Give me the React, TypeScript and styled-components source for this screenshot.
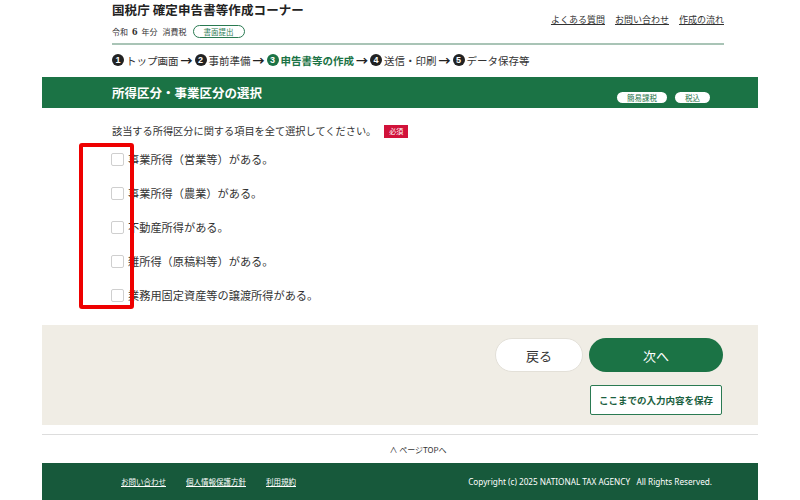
import React from "react";
import styled, { createGlobalStyle } from "styled-components";

const GlobalStyle = createGlobalStyle`
  html, body {
    margin: 0;
    padding: 0;
    background: #ffffff;
  }
  body {
    font-family: "Noto Sans CJK JP", "Noto Sans", sans-serif;
    color: #333333;
  }
`;

const Page = styled.div`
  width: 800px;
  height: 500px;
  overflow: hidden;
  position: relative;
`;

const Frame = styled.div`
  margin: 0 42px;
`;

const Inner = styled.div`
  padding: 0 34px 0 70px;
`;

const Header = styled(Inner)`
  padding-top: 1px;
`;

const HeaderTop = styled.div`
  display: flex;
  justify-content: space-between;
  align-items: flex-start;
`;

const Brand = styled.div`
  display: flex;
  flex-direction: column;
`;

const SiteTitle = styled.h1`
  margin: 0;
  font-size: 12.5px;
  font-weight: 700;
  line-height: 18px;
  color: #222;
  letter-spacing: 0.1px;
`;

const HeadLinks = styled.nav`
  display: flex;
  gap: 10px;
  margin-top: 12px;
`;

const HeadLink = styled.a`
  font-size: 9px;
  color: #333;
  text-decoration: underline;
  line-height: 14px;
`;

const MetaRow = styled.div`
  display: flex;
  align-items: center;
  gap: 5px;
  margin-top: 5px;
  font-size: 8px;
  color: #333;
  height: 14px;
`;

const Year = styled.span`
  font-size: 8px;
  b {
    font-size: 11px;
    font-weight: 700;
    margin: 0 4px;
    font-family: "Liberation Serif", serif;
  }
`;

const OutlinePill = styled.span`
  display: inline-flex;
  align-items: center;
  justify-content: center;
  width: 50px;
  height: 11px;
  border: 1px solid #2a7a52;
  border-radius: 7px;
  font-size: 7.5px;
  color: #2a7a52;
  margin-left: 1px;
`;

const Rule = styled.hr`
  margin: 5px 0 0;
  border: 0;
  border-top: 2px solid #a9c4b6;
`;

const Steps = styled.ol`
  list-style: none;
  margin: 0;
  padding: 0;
  display: flex;
  align-items: center;
  height: 30px;
  font-size: 10.5px;
  color: #333;
`;

const Step = styled.li<{ $current?: boolean }>`
  display: flex;
  align-items: center;
  gap: 2px;
  font-weight: ${(p) => (p.$current ? 700 : 400)};
  color: ${(p) => (p.$current ? "#1b7345" : "#333")};
  white-space: nowrap;
`;

const StepNum = styled.span<{ $current?: boolean }>`
  display: inline-flex;
  align-items: center;
  justify-content: center;
  width: 12px;
  height: 12px;
  border-radius: 50%;
  background: ${(p) => (p.$current ? "#1b7345" : "#222")};
  color: #fff;
  font-size: 9px;
  font-weight: 700;
  font-family: "Liberation Sans", sans-serif;
`;

const Arrow = styled.span`
  font-weight: 700;
  margin: 0 2px;
  font-size: 12px;
  color: #222;
`;

const SectionBar = styled.div`
  background: #1b7345;
  height: 31px;
  display: flex;
  align-items: center;
  justify-content: space-between;
  padding: 0 48px 0 70px;
  margin-top: 2px;
`;

const SectionTitle = styled.h2`
  margin: 0;
  font-size: 12.5px;
  font-weight: 700;
  color: #ffffff;
`;

const Tags = styled.div`
  display: flex;
  gap: 8px;
  margin-top: 10px;
`;

const Tag = styled.span<{ $w: number }>`
  display: inline-flex;
  align-items: center;
  justify-content: center;
  width: ${(p) => p.$w}px;
  height: 11px;
  border-radius: 6px;
  background: #ffffff;
  color: #1b7345;
  font-size: 7.5px;
`;

const Body = styled(Inner)`
  position: relative;
  padding-top: 16px;
  padding-bottom: 23px;
`;

const Prompt = styled.p`
  margin: 0;
  display: flex;
  align-items: center;
  gap: 8px;
  font-size: 10.2px;
  line-height: 14px;
  color: #333;
`;

const Required = styled.span`
  display: inline-flex;
  align-items: center;
  justify-content: center;
  background: #d1123a;
  color: #fff;
  font-size: 7px;
  width: 24px;
  height: 13px;
`;

const Options = styled.div`
  display: flex;
  flex-direction: column;
  gap: 21px;
  margin-top: 15px;
`;

const Option = styled.label`
  display: flex;
  align-items: center;
  gap: 4px;
  font-size: 11.2px;
  line-height: 13px;
  color: #333;
  margin-left: -1px;
`;

const Box = styled.span`
  width: 11px;
  height: 11px;
  border: 1px solid #cfcfcf;
  border-radius: 2px;
  background: #fff;
  flex: none;
`;

const Highlight = styled.div`
  position: absolute;
  left: 37px;
  top: 35px;
  width: 47px;
  height: 158px;
  border: 4px solid #ee0000;
  border-radius: 3px;
`;

const ActionArea = styled.div`
  background: #f0ede5;
  height: 100px;
  padding: 13px 35px 0 0;
  box-sizing: border-box;
  display: flex;
  flex-direction: column;
  align-items: flex-end;
  gap: 13px;
`;

const ButtonRow = styled.div`
  display: flex;
  gap: 6px;
`;

const BackButton = styled.button`
  width: 88px;
  height: 34px;
  border-radius: 17px;
  border: 1px solid #e3e0d8;
  background: #ffffff;
  font-family: inherit;
  font-size: 13px;
  color: #333;
`;

const NextButton = styled.button`
  width: 134px;
  height: 34px;
  border-radius: 17px;
  border: 0;
  background: #1b7345;
  font-family: inherit;
  font-size: 13px;
  color: #ffffff;
`;

const SaveButton = styled.button`
  width: 132px;
  height: 30px;
  border: 1px solid #2a7a52;
  border-radius: 2px;
  background: #ffffff;
  font-family: inherit;
  font-size: 9.5px;
  font-weight: 700;
  color: #1b6040;
  margin-right: 1px;
`;

const PageTop = styled(Inner)`
  margin-top: 9px;
  border-top: 1px solid #dddddd;
  height: 28px;
  display: flex;
  align-items: center;
  justify-content: center;
  font-size: 8px;
  color: #333;
`;

const Footer = styled.footer`
  background: #17593b;
  height: 40px;
  display: flex;
  align-items: center;
  justify-content: space-between;
  padding: 0 46px 4px 79px;
  box-sizing: border-box;
`;

const FootLinks = styled.div`
  display: flex;
  gap: 20px;
`;

const FootLink = styled.a`
  color: #fff;
  font-size: 7.5px;
  text-decoration: underline;
`;

const Copy = styled.span`
  color: #fff;
  font-size: 8.2px;
  font-family: "Noto Sans", sans-serif;
`;

const steps = [
  { n: 1, label: "トップ画面" },
  { n: 2, label: "事前準備" },
  { n: 3, label: "申告書等の作成", current: true },
  { n: 4, label: "送信・印刷" },
  { n: 5, label: "データ保存等" },
];

const options = [
  "事業所得（営業等）がある。",
  "事業所得（農業）がある。",
  "不動産所得がある。",
  "雑所得（原稿料等）がある。",
  "業務用固定資産等の譲渡所得がある。",
];

export default function App() {
  return (
    <Page>
      <GlobalStyle />
      <Frame>
        <Header>
          <HeaderTop>
            <Brand>
              <SiteTitle>国税庁 確定申告書等作成コーナー</SiteTitle>
              <MetaRow>
                <Year>
                  令和<b>6</b>年分
                </Year>
                <span>消費税</span>
                <OutlinePill>書面提出</OutlinePill>
              </MetaRow>
            </Brand>
            <HeadLinks>
              <HeadLink>よくある質問</HeadLink>
              <HeadLink>お問い合わせ</HeadLink>
              <HeadLink>作成の流れ</HeadLink>
            </HeadLinks>
          </HeaderTop>
          <Rule />
          <Steps>
            {steps.map((s, i) => (
              <React.Fragment key={s.n}>
                {i > 0 && <Arrow>→</Arrow>}
                <Step $current={s.current}>
                  <StepNum $current={s.current}>{s.n}</StepNum>
                  {s.label}
                </Step>
              </React.Fragment>
            ))}
          </Steps>
        </Header>

        <SectionBar>
          <SectionTitle>所得区分・事業区分の選択</SectionTitle>
          <Tags>
            <Tag $w={50}>簡易課税</Tag>
            <Tag $w={35}>税込</Tag>
          </Tags>
        </SectionBar>

        <Body>
          <Prompt>
            該当する所得区分に関する項目を全て選択してください。
            <Required>必須</Required>
          </Prompt>
          <Options>
            {options.map((o) => (
              <Option key={o}>
                <Box />
                {o}
              </Option>
            ))}
          </Options>
          <Highlight />
        </Body>

        <ActionArea>
          <ButtonRow>
            <BackButton>戻る</BackButton>
            <NextButton>次へ</NextButton>
          </ButtonRow>
          <SaveButton>ここまでの入力内容を保存</SaveButton>
        </ActionArea>

        <PageTop>∧ ページTOPへ</PageTop>

        <Footer>
          <FootLinks>
            <FootLink>お問い合わせ</FootLink>
            <FootLink>個人情報保護方針</FootLink>
            <FootLink>利用規約</FootLink>
          </FootLinks>
          <Copy>Copyright (c) 2025 NATIONAL TAX AGENCY&nbsp;&nbsp;&nbsp;All Rights Reserved.</Copy>
        </Footer>
      </Frame>
    </Page>
  );
}
